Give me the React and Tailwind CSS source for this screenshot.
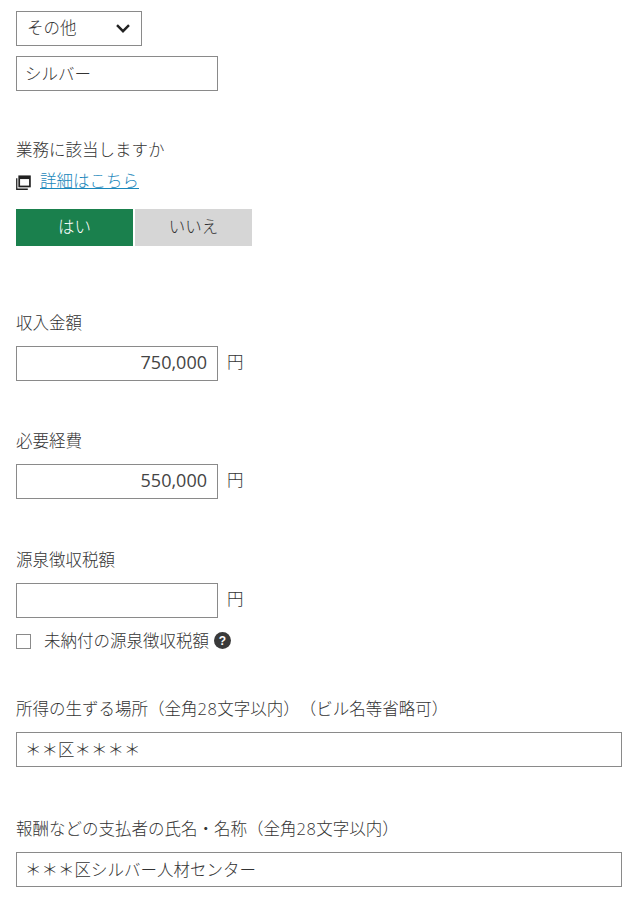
import React from "react";

const inputBase = "block h-[35px] border border-[#8a8a8a] bg-white px-[8px] pb-[2px] text-[16.5px] text-[#333] outline-none";
const digits = "font-['Open_Sans',sans-serif] tracking-[0.5px]";

function Money({ value, mt }) {
  return (
    <div className={`flex items-center gap-[9px] ${mt}`}>
      <input readOnly value={value} className={`${inputBase} w-[202px] text-right pr-[10px] pb-[3px] font-['Open_Sans','Noto_Sans_CJK_JP',sans-serif] font-normal text-[18px] text-[#444]`} />
      <span className="pb-[5px] text-[16.5px] leading-none">円</span>
    </div>
  );
}

export default function App() {
  return (
    <div className="w-[642px] h-[900px] overflow-hidden bg-white pl-4 pr-5 pt-[11px] text-[#333] text-[16.5px] leading-6 font-['Noto_Sans_CJK_JP',sans-serif] font-light [text-spacing-trim:space-all]">
      <div className="flex h-[35px] w-[126px] items-center justify-between border border-[#8a8a8a] pb-[3px] pl-[10px] pr-[11px]">
        <span>その他</span>
        <svg width="14" height="9" viewBox="0 0 14 9" fill="none" stroke="#222" strokeWidth="2.4" className="mt-[3px]"><path d="M1 1.2 7 7.2 13 1.2" /></svg>
      </div>
      <input readOnly value="シルバー" className={`${inputBase} mt-[10px] w-[202px]`} />

      <div className="mt-[46px]">業務に該当しますか</div>
      <div className="mt-[7px] flex items-center gap-[9px]">
        <svg width="15" height="15" viewBox="0 0 14 14" className="mt-[5px]" fill="none" stroke="#222">
          <path d="M.7 3v10.3H11" strokeWidth="1.2" />
          <rect x="3" y="1.2" width="10" height="9.5" strokeWidth="1.6" />
          <path d="M3 2.6h10" strokeWidth="2.4" />
        </svg>
        <a href="#" className="text-[#1a87bb] underline">詳細はこちら</a>
      </div>
      <div className="mt-[17px] flex gap-[2px]">
        <button className="h-[37px] w-[117px] bg-[#1a804d] pb-1 font-light text-white">はい</button>
        <button className="h-[37px] w-[117px] bg-[#d6d6d6] pb-1 font-light text-[#333]">いいえ</button>
      </div>

      <div className="mt-[64px]">収入金額</div>
      <Money value="750,000" mt="mt-[12px]" />
      <div className="mt-[47px]">必要経費</div>
      <Money value="550,000" mt="mt-[12px]" />
      <div className="mt-[48px]">源泉徴収税額</div>
      <Money value="" mt="mt-[12px]" />
      <div className="mt-[10px] flex items-center">
        <span className="mt-[3px] h-[15px] w-[15px] border border-[#8a8a8a]" />
        <span className="ml-[13px]">未納付の源泉徴収税額</span>
        <span className="ml-[5px] mt-[1px] flex h-[17px] w-[17px] items-center justify-center rounded-full bg-[#3a3a3a] font-['Liberation_Sans',sans-serif] text-[12px] font-bold leading-none text-white">?</span>
      </div>

      <div className="mt-[44px]">所得の生ずる場所（全角<span className={digits}>28</span>文字以内）（ビル名等省略可）</div>
      <input readOnly value="＊＊区＊＊＊＊" className={`${inputBase} mt-[11px] w-[606px]`} />
      <div className="mt-[49px]">報酬などの支払者の氏名・名称（全角<span className={digits}>28</span>文字以内）</div>
      <input readOnly value="＊＊＊区シルバー人材センター" className={`${inputBase} mt-[11px] w-[606px]`} />
    </div>
  );
}
